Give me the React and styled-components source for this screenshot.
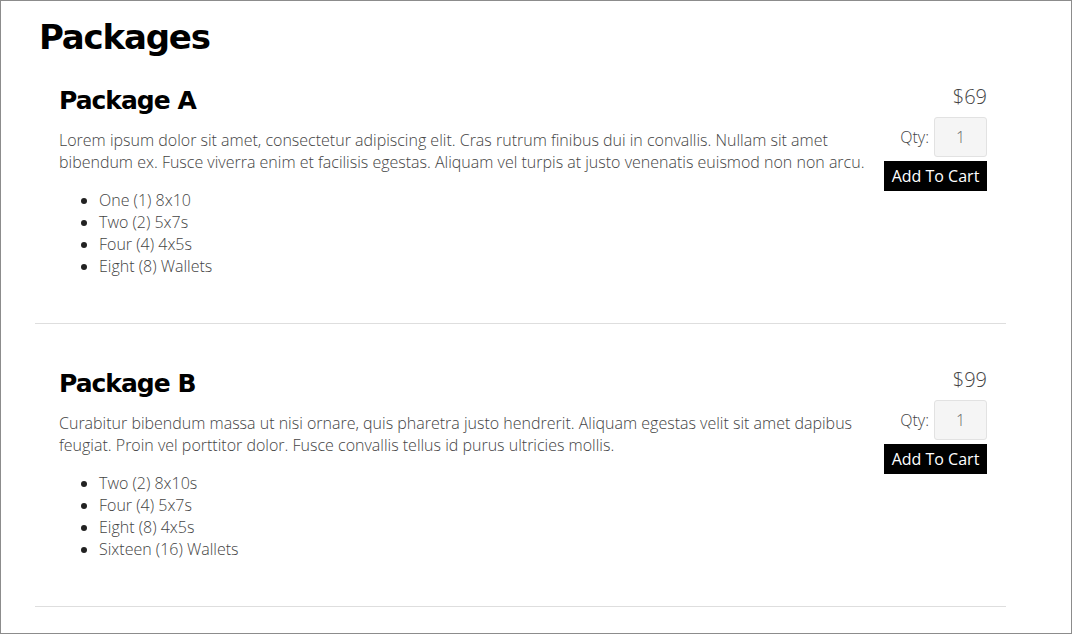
import React from "react";
import styled, { createGlobalStyle } from "styled-components";

const Global = createGlobalStyle`
  html, body { margin: 0; padding: 0; background: #fff; }
  * { box-sizing: border-box; }
`;

const Page = styled.div`
  height: 634px;
  width: 1072px;
  border: 1px solid #8c8c8c;
  overflow: hidden;
  padding: 16px 0 0 34px;
  font-family: "Open Sans", "Liberation Sans", sans-serif;
  color: #444;
`;

const Title = styled.h1`
  margin: 0 0 0 4px;
  font-family: "DejaVu Sans", "Liberation Sans", sans-serif;
  font-weight: 700;
  font-size: 34px;
  line-height: 40px;
  letter-spacing: -1.2px;
  color: #000;
`;

const Section = styled.section`
  width: 971px;
  padding: 29px 19px 46px 24px;
  border-bottom: 1px solid #dedede;
  display: flex;
  gap: 10px;
  align-items: flex-start;
  & + & { margin-top: 16px; }
`;

const Details = styled.div`
  flex: 1;
  min-width: 0;
`;

const Name = styled.h2`
  margin: 0 0 13px;
  font-family: "DejaVu Sans", "Liberation Sans", sans-serif;
  font-weight: 700;
  font-size: 25px;
  line-height: 30px;
  letter-spacing: -1px;
  color: #000;
`;

const Desc = styled.p`
  margin: 0 0 16px;
  font-weight: 300;
  font-size: 16px;
  line-height: 22px;
`;

const Items = styled.ul`
  margin: 0;
  padding-left: 40px;
  font-weight: 300;
  font-size: 16px;
  line-height: 22px;
  li::marker { color: #222; }
`;

const Side = styled.div`
  width: 103px;
  display: flex;
  flex-direction: column;
  align-items: flex-end;
`;

const Price = styled.div`
  font-weight: 300;
  font-size: 20px;
  line-height: 20px;
  margin: 1px 0 10px;
`;

const QtyRow = styled.label`
  display: flex;
  align-items: center;
  gap: 5px;
  font-weight: 300;
  font-size: 16px;
  line-height: 22px;
  margin-bottom: 4px;
`;

const QtyInput = styled.input`
  width: 53px;
  height: 40px;
  border: 1px solid #e2e2e2;
  border-radius: 3px;
  background: #f5f5f5;
  text-align: center;
  font-family: "Open Sans", "Liberation Sans", sans-serif;
  font-weight: 300;
  font-size: 16px;
  color: #666;
  padding: 0;
  outline: none;
`;

const CartButton = styled.button`
  width: 103px;
  height: 30px;
  border: none;
  border-radius: 0;
  background: #000;
  color: #fff;
  font-family: "Open Sans", "Liberation Sans", sans-serif;
  font-weight: 400;
  font-size: 16px;
  padding: 0;
  cursor: pointer;
`;

const packages = [
  {
    name: "Package A",
    price: "$69",
    desc: "Lorem ipsum dolor sit amet, consectetur adipiscing elit. Cras rutrum finibus dui in convallis. Nullam sit amet bibendum ex. Fusce viverra enim et facilisis egestas. Aliquam vel turpis at justo venenatis euismod non non arcu.",
    items: ["One (1) 8x10", "Two (2) 5x7s", "Four (4) 4x5s", "Eight (8) Wallets"],
  },
  {
    name: "Package B",
    price: "$99",
    desc: "Curabitur bibendum massa ut nisi ornare, quis pharetra justo hendrerit. Aliquam egestas velit sit amet dapibus feugiat. Proin vel porttitor dolor. Fusce convallis tellus id purus ultricies mollis.",
    items: ["Two (2) 8x10s", "Four (4) 5x7s", "Eight (8) 4x5s", "Sixteen (16) Wallets"],
  },
];

export default function App() {
  return (
    <>
      <Global />
      <Page>
        <Title>Packages</Title>
        {packages.map((p) => (
          <Section key={p.name}>
            <Details>
              <Name>{p.name}</Name>
              <Desc>{p.desc}</Desc>
              <Items>
                {p.items.map((i) => (
                  <li key={i}>{i}</li>
                ))}
              </Items>
            </Details>
            <Side>
              <Price>{p.price}</Price>
              <QtyRow>
                Qty:
                <QtyInput type="text" defaultValue="1" />
              </QtyRow>
              <CartButton>Add To Cart</CartButton>
            </Side>
          </Section>
        ))}
      </Page>
    </>
  );
}
